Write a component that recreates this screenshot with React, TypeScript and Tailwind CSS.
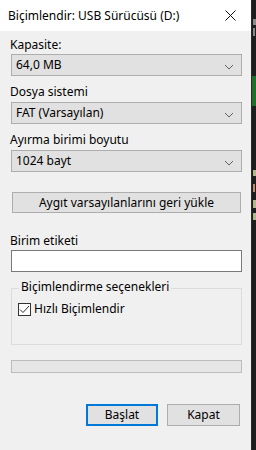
import React from "react";

const font = { fontFamily: '"Noto Sans", "Open Sans", sans-serif' };

const Chevron = () => (
  <svg width="10" height="6" viewBox="0 0 10 6" className="absolute right-[7px] top-[9px]">
    <path d="M1 1 L5 5 L9 1" fill="none" stroke="#606060" strokeWidth="1" />
  </svg>
);

const Select = ({ value }: { value: string }) => (
  <div className="relative ml-[11px] mr-[9px] h-[22px] border border-[#adadad] bg-[#e1e1e1] pl-[4px] text-[12px] leading-[20px] text-black">
    {value}
    <Chevron />
  </div>
);

const Label = ({ text, className }: { text: string; className?: string }) => (
  <div className={"px-[10px] text-[12px] leading-[16px] text-black " + (className ?? "")}>{text}</div>
);

const App = () => {
  return (
    <div className="flex h-[450px] w-[256px] overflow-hidden" style={font}>
      <div className="flex w-[251px] flex-col bg-[#f0f0f0]">
        {/* title bar */}
        <div className="flex h-[31px] items-center justify-between bg-white pl-[8px] pr-[15px]">
          <span className="text-[12px] text-black">Biçimlendir: USB Sürücüsü (D:)</span>
          <svg width="11" height="11" viewBox="0 0 11 11">
            <path d="M0.5 0.5 L10.5 10.5 M10.5 0.5 L0.5 10.5" stroke="#111" strokeWidth="1" />
          </svg>
        </div>

        <Label text="Kapasite:" className="mt-[6px] mb-[1px]" />
        <Select value="64,0 MB" />

        <Label text="Dosya sistemi" className="mt-[8px] mb-[2px]" />
        <Select value="FAT (Varsayılan)" />

        <Label text="Ayırma birimi boyutu" className="mt-[8px] mb-[2px]" />
        <Select value="1024 bayt" />

        <div className="ml-[12px] mr-[10px] mt-[20px] flex h-[21px] items-center justify-center border border-[#adadad] bg-[#e1e1e1] text-[12px] text-black">
          Aygıt varsayılanlarını geri yükle
        </div>

        <Label text="Birim etiketi" className="mt-[20px] mb-[1px]" />
        <div className="ml-[11px] mr-[9px] h-[22px] border border-[#7a7a7a] bg-white" />

        {/* group box */}
        <div className="relative ml-[11px] mr-[9px] mt-[16px] h-[57px] border border-[#dcdcdc]">
          <span className="absolute left-[7px] top-[-10px] bg-[#f0f0f0] px-[2px] text-[12px] leading-[16px] text-black">
            Biçimlendirme seçenekleri
          </span>
          <div className="mt-[12px] ml-[6px] flex items-center gap-[3px]">
            <div className="flex h-[13px] w-[13px] items-center justify-center border border-[#333] bg-white">
              <svg width="11" height="9" viewBox="0 0 11 9">
                <path d="M1 4.5 L4 7.5 L10 1" fill="none" stroke="#333" strokeWidth="1" />
              </svg>
            </div>
            <span className="text-[12px] leading-[16px] text-black">Hızlı Biçimlendir</span>
          </div>
        </div>

        <div className="ml-[11px] mr-[9px] mt-[15px] h-[13px] border border-[#bcbcbc] bg-[#e6e6e6]" />

        <div className="mt-[31px] flex justify-end gap-[9px] pr-[11px]">
          <div className="flex h-[22px] w-[72px] items-center justify-center border-2 border-[#0078d7] bg-[#e1e1e1] text-[12px] text-black">
            Başlat
          </div>
          <div className="flex h-[22px] w-[73px] items-center justify-center border border-[#adadad] bg-[#e1e1e1] text-[12px] text-black">
            Kapat
          </div>
        </div>
      </div>

      {/* background window peeking out */}
      <div className="flex w-[5px] flex-col border-l border-[#2b2b2b] bg-[#1e1e1e]">
        <div className="ml-[1px] mt-[19px] h-[6px] w-[3px] bg-[#8a8a8a]" />
        <div className="ml-[1px] mt-[3px] h-[8px] w-[2px] bg-[#8a8a8a]" />
        <div className="mt-[40px] h-[30px] bg-[#1f6f2b]" />
        <div className="ml-[1px] mt-[64px] h-[6px] w-[3px] bg-[#b5b58a]" />
        <div className="ml-[1px] mt-[8px] h-[8px] w-[2px] bg-[#c08a6a]" />
        <div className="ml-[1px] mt-[8px] h-[8px] w-[3px] bg-[#b5b58a]" />
        <div className="ml-[1px] mt-[5px] h-[7px] w-[3px] bg-[#b5b58a]" />
      </div>
    </div>
  );
};

export default App;
